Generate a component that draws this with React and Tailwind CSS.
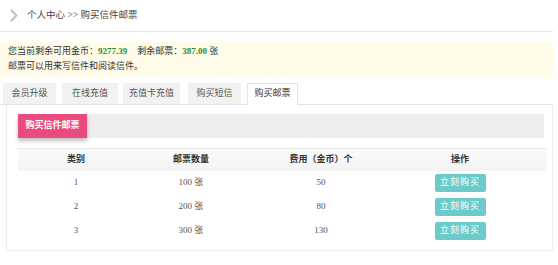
import React from 'react';

const rows = [
  { id: 1, count: '100', price: '50' },
  { id: 2, count: '200', price: '80' },
  { id: 3, count: '300', price: '130' }
];

const tabs = [
  { label: '会员升级', cls: 'ml-[3px] w-[53px]' },
  { label: '在线充值', cls: 'ml-[6px] w-[56px]' },
  { label: '充值卡充值', cls: 'ml-[5px] w-[57px]' },
  { label: '购买短信', cls: 'ml-[8px] w-[53px]' },
  { label: '购买邮票', cls: 'ml-[6px] w-[51px]', active: true }
];

const App = () => {
  return (
    <div
      className="w-[558px] h-[265px] bg-white text-[9px] text-[#333] overflow-hidden"
      style={{ fontFamily: '"Liberation Serif", "Noto Sans CJK SC", serif' }}
    >
      {/* 面包屑 */}
      <div className="h-[32px] mr-[5px] flex items-center border-b border-[#e6e6e6]">
        <svg width="8" height="13" viewBox="0 0 8 13" className="ml-[10px]">
          <path d="M1 1 L6.5 6.5 L1 12" fill="none" stroke="#bdbdbd" strokeWidth="1.8" />
        </svg>
        <span className="ml-[9px] text-[9.5px] text-[#444]">个人中心 &gt;&gt; 购买信件邮票</span>
      </div>

      {/* 提示 */}
      <div className="mt-[10px] mr-[5px] h-[35px] bg-[#fefbe8] pl-[8px] pt-[2px] leading-[15px] text-[#333]">
        <div>
          您当前剩余可用金币：<b className="text-[#2e8b2e]">9277.39</b>
          <span className="ml-[10px]">剩余邮票：</span>
          <b className="text-[#2e8b2e]">387.00</b> 张
        </div>
        <div>邮票可以用来写信件和阅读信件。</div>
      </div>

      {/* 选项卡 */}
      <div className="mt-[6px] mr-[5px] flex border-b border-[#e2e2e2]">
        {tabs.map(t => (
          <div
            key={t.label}
            className={
              t.active
                ? `${t.cls} h-[22px] flex items-center justify-center bg-white border border-[#e2e2e2] border-b-white -mb-px text-[#333]`
                : `${t.cls} h-[21px] flex items-center justify-center bg-[#f2f2f2] text-[#555]`
            }
          >
            {t.label}
          </div>
        ))}
      </div>

      {/* 内容 */}
      <div className="ml-[6px] mr-[5px] border-l border-r border-b border-[#eeeeee] pt-[9px] pb-[7px]">
        <div className="ml-[11px] mr-[8px] h-[24px] bg-[#ededed] flex">
          <div className="w-[69px] h-[24px] bg-[#ea4a7d] text-white font-bold flex items-center justify-center shadow-[0_3px_4px_rgba(0,0,0,0.25)]">
            购买信件邮票
          </div>
        </div>

        <div className="ml-[11px] mr-[5px] mt-[10px]">
          <div className="grid grid-cols-[116px_114px_146px_132px_1fr] h-[23px] items-center bg-gradient-to-b from-[#fafafa] to-[#f3f3f3] border-t border-[#e8e8e8] font-bold text-[#333]">
            <div className="text-center">类别</div>
            <div className="text-center">邮票数量</div>
            <div className="text-center">费用（金币）个</div>
            <div className="text-center">操作</div>
            <div />
          </div>
          {rows.map(r => (
            <div
              key={r.id}
              className="grid grid-cols-[116px_114px_146px_132px_1fr] h-[24px] items-center text-[#555]"
            >
              <div className="text-center">{r.id}</div>
              <div className="text-center">{r.count} 张</div>
              <div className="text-center">{r.price}</div>
              <div className="flex justify-center">
                <button className="w-[51px] h-[18px] rounded-[2px] bg-[#6ccaca] text-white text-[9px] tracking-[1px]">
                  立刻购买
                </button>
              </div>
              <div />
            </div>
          ))}
        </div>
      </div>
    </div>
  );
};

export default App;
